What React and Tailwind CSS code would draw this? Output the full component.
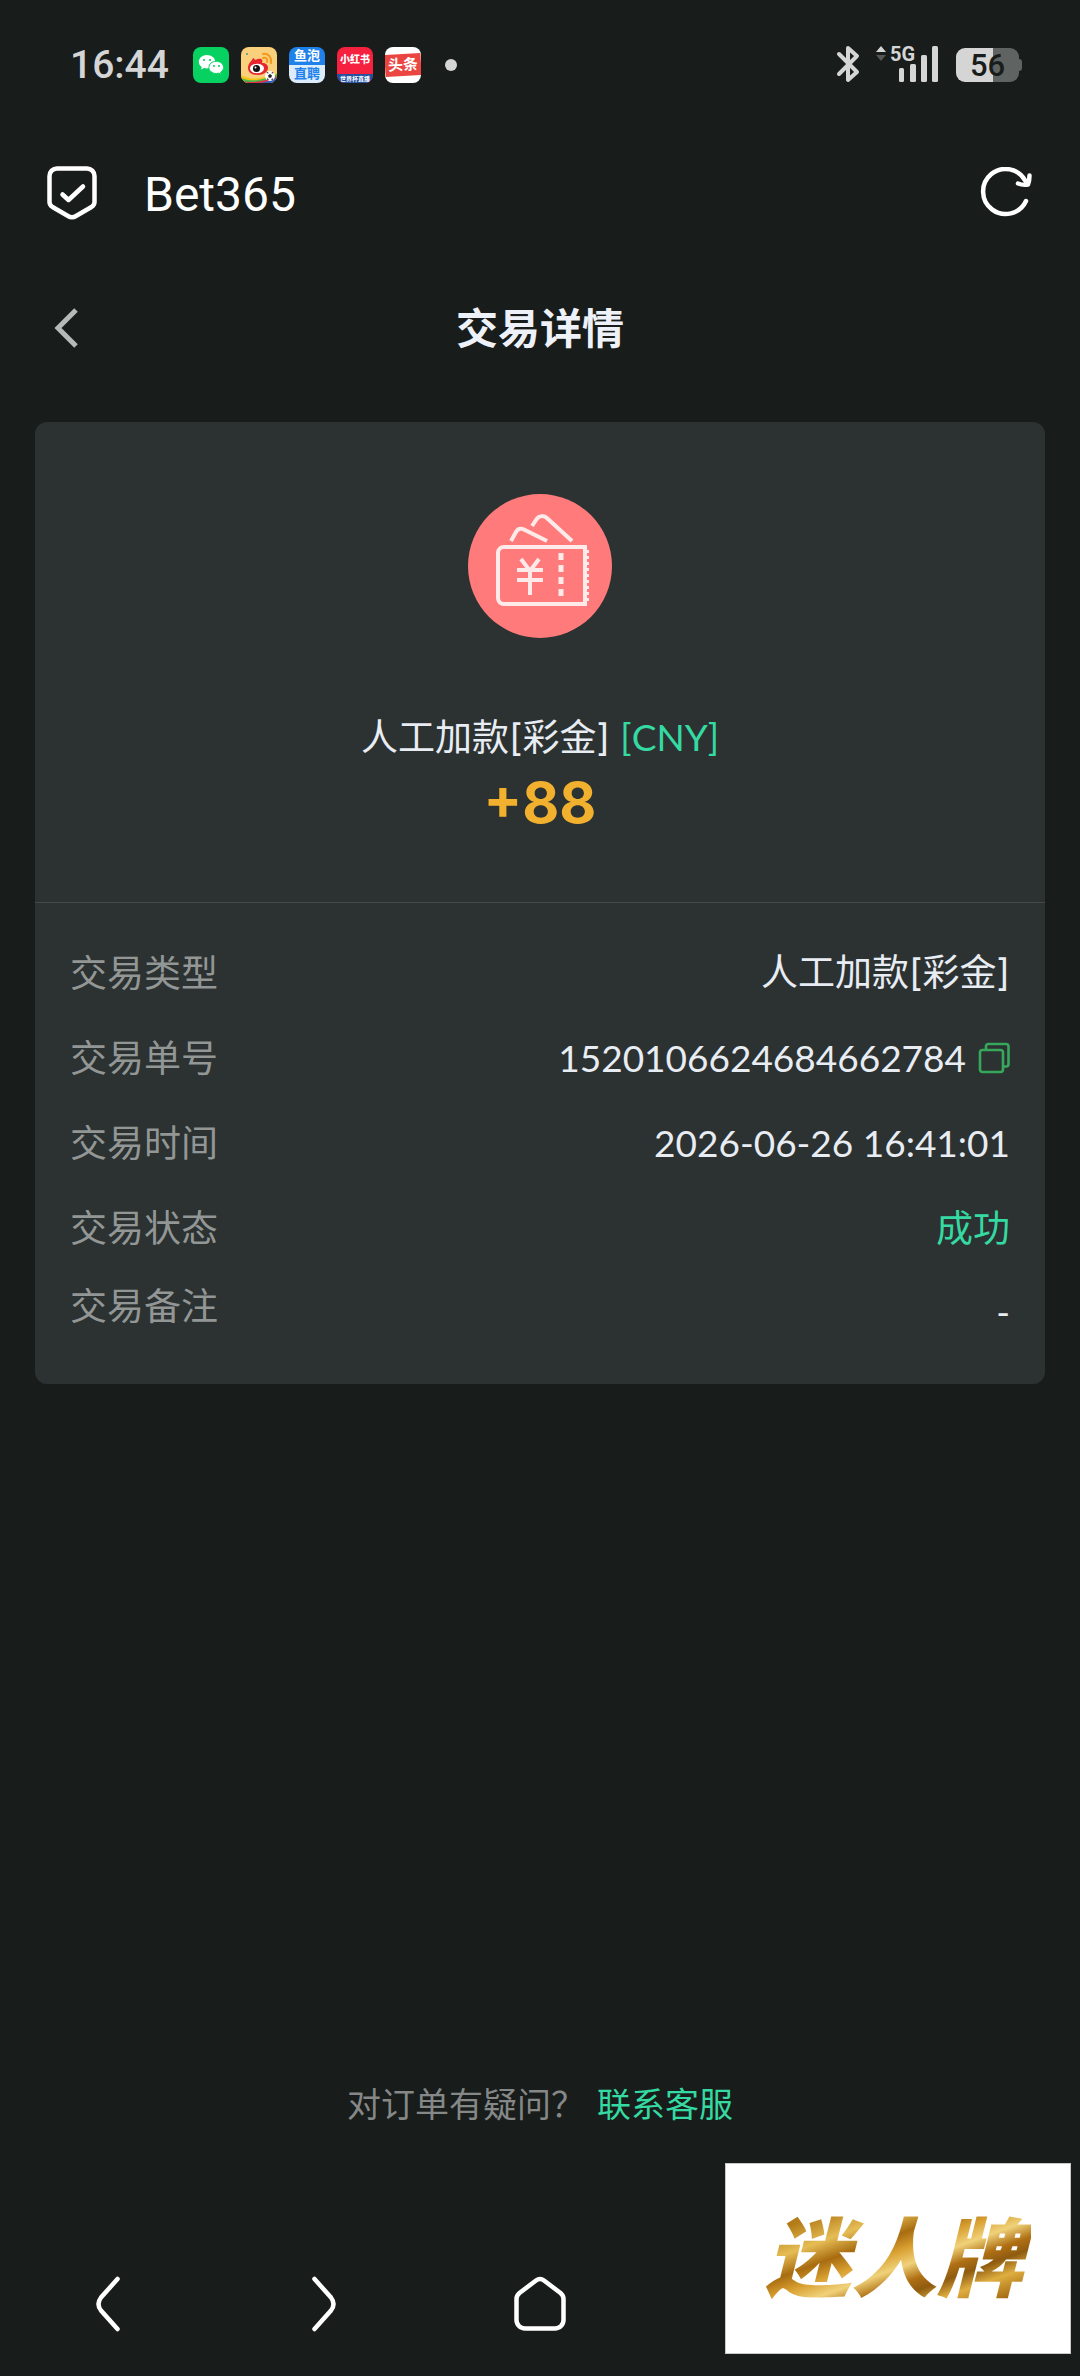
import React from 'react';

const details = [
  { label: '交易类型', value: '人工加款[彩金]', wide: true },
  { label: '交易单号', value: '1520106624684662784', copy: true },
  { label: '交易时间', value: '2026-06-26 16:41:01' },
  { label: '交易状态', value: '成功', success: true },
];

const WechatIcon = () => (
  <svg viewBox="0 0 36 36" className="w-9 h-9 rounded-lg bg-[#07d160]">
    <path d="M14 8c-4.600 0-8.200 3-8.200 6.800 0 2.100 1.100 4 3 5.200l-.8 2.600 3-1.500c1 .3 2 .4 3 .4 4.600 0 8.300-3 8.300-6.700S18.600 8 14 8z" fill="#fff" />
    <path d="M23.300 14.300c-4.200 0-7.400 2.700-7.400 6.100s3.200 6.100 7.400 6.100c.9 0 1.700-.1 2.500-.3l2.500 1.200-.7-2.200c1.900-1.200 3-2.900 3-4.800 0-3.400-3.200-6.100-7.300-6.100z" fill="#fff" stroke="#07d160" />
    <circle cx="11" cy="13" r="1.100" fill="#07d160" />
    <circle cx="17" cy="13" r="1.100" fill="#07d160" />
    <circle cx="21" cy="19" r="1" fill="#07d160" />
    <circle cx="26" cy="19" r="1" fill="#07d160" />
  </svg>
);

const WeiboIcon = () => (
  <svg viewBox="0 0 36 36" className="w-9 h-9 rounded-lg bg-[#fbd07c]">
    <path d="M0 28c8 5 18 5 36-2v10H0z" fill="#f5c518" />
    <path d="M0 31c10 4 20 3 36-4v9H0z" fill="#4db848" />
    <path d="M0 34c12 2 22 1 36-5v7H0z" fill="#d9304c" />
    <path d="M20 36c6-1 11-3 16-6v6z" fill="#2a64c5" />
    <circle cx="6" cy="7" r="1" fill="#3a9a9a" />
    <path d="M7 21c0-5 4-7 5-10 1 1 2 1 2 2 3-1 6-2 7 0 1 1 0 2 0 3 4 0 6 2 6 5 0 4-5 7-10 7S7 26 7 21z" fill="#e6252c" />
    <ellipse cx="16" cy="21.500" rx="7" ry="4.800" fill="#fff" />
    <circle cx="15.500" cy="21.500" r="3.500" fill="#111" />
    <circle cx="14.500" cy="20.500" r="1" fill="#fff" />
    <path d="M22 7c5-1 9 3 8 9M22 11c3-1 5 1 4 4" stroke="#f39a1e" strokeWidth="2" fill="none" strokeLinecap="round" />
    <circle cx="29" cy="29" r="5" fill="#fff" />
    <path d="M29 27l2 1.500-.8 2.300h-2.400L27 28.500zM25 26l2-1 .5 1.500zM33 26l-2-1-.5 1.500zM26 33l.5-2 1.500 1.500zM32 33l-.5-2-1.500 1.500z" fill="#222" />
  </svg>
);

const BluetoothIcon = () => (
  <svg viewBox="0 0 24 40" className="w-6 h-10 mr-4" fill="none" stroke="#d5d5d5" strokeWidth="4" strokeLinejoin="round" strokeLinecap="round">
    <path d="M3 9l18 18-9 8V3l9 8L3 29" />
  </svg>
);

const SignalIcon = () => (
  <svg viewBox="0 -10 64 60" className="w-16 h-[60px] mr-4" fill="#d5d5d5">
    <path d="M0 7l5-6 5 6z" />
    <path d="M0 10l5 6 5-6z" fill="#555" />
    <text x="14" y="16" fontFamily="Roboto" fontSize="20" fontWeight="700">5G</text>
    <rect x="23" y="23" width="5" height="14" rx="1.500" />
    <rect x="34" y="19" width="6" height="18" rx="1.500" />
    <rect x="45" y="10" width="6" height="27" rx="1.500" />
    <rect x="56" y="1" width="6" height="36" rx="1.500" />
  </svg>
);

const TicketIcon = () => (
  <svg viewBox="0 0 144 144" className="w-36 h-36" fill="none" stroke="#ffeaea" strokeWidth="4">
    <circle cx="72" cy="72" r="72" fill="#ff7b7b" stroke="none" />
    <path d="M117 53H36a6 6 0 0 0-6 6v45a6 6 0 0 0 6 6h81z" />
    <path d="M120 56v53" strokeWidth="2" strokeDasharray="3 3" />
    <path d="M93 59v44" strokeWidth="5" strokeDasharray="7 5" />
    <path d="M53 65l9 12 9-12M49 76h26M49 86h26M62 76v25" />
    <path d="M43 47l5-9c2-4 6-4 9-2l22 11" />
    <path d="M64 32l4-6c3-5 8-5 12-1l24 22" />
  </svg>
);

const StatusBar = () => (
  <div className="h-[130px] pl-[70px] pr-[58px] flex items-center">
    <span className="w-[123px] text-[39px] leading-none font-medium text-[#d5d5d5]">16:44</span>
    <div className="flex items-center gap-3">
      <WechatIcon />
      <WeiboIcon />
      <div className="w-9 h-9 rounded-lg overflow-hidden text-center text-[13px] leading-[18px] font-bold">
        <div className="bg-[#1f82ea] text-white">鱼泡</div>
        <div className="bg-[#dcecfb] text-[#1f82ea]">直聘</div>
      </div>
      <div className="w-9 h-9 rounded-lg overflow-hidden bg-[#f5213f] text-center text-white flex flex-col justify-between">
        <div className="pt-1 text-[10px] leading-[18px] font-black">小红书</div>
        <div className="bg-[#25509f] text-[6px] leading-[9px] font-bold whitespace-nowrap">世界杯直播</div>
      </div>
      <div className="w-9 h-9 rounded-lg overflow-hidden bg-white flex flex-col justify-center">
        <div className="bg-[#ea4541] text-center text-white text-[15px] leading-[22px] font-bold -rotate-3">头条</div>
      </div>
    </div>
    <span className="w-3 h-3 ml-6 rounded-full bg-[#d5d5d5]" />
    <div className="ml-auto flex items-center">
      <BluetoothIcon />
      <SignalIcon />
      <div className="w-[63px] h-[34px] rounded-[9px] bg-linear-to-r from-[#d5d5d5] from-59% to-[#5f6362] to-59% text-center text-[31px] leading-[35px] font-medium text-[#181c1b]">56</div>
      <span className="w-[3px] h-3 rounded-r bg-[#5f6362]" />
    </div>
  </div>
);

const BrowserBar = () => (
  <div className="h-[126px] pl-[47px] pr-[48px] flex items-center">
    <svg viewBox="0 0 50 54" className="w-[50px] h-[54px]" fill="none" stroke="#fff" strokeWidth="4.500" strokeLinecap="round" strokeLinejoin="round">
      <path d="M10 2.500h30a7.500 7.500 0 0 1 7.500 7.500v26q0 3-3 5L29 50q-4 2.500-8 0L5.500 41q-3-2-3-5V10A7.500 7.500 0 0 1 10 2.500z" />
      <path d="M15.500 28.500l6 5.500L36 20.500" />
    </svg>
    <span className="ml-[47px] pt-1 text-5xl leading-none text-white">Bet365</span>
    <button type="button" aria-label="刷新" className="ml-auto">
      <svg viewBox="0 0 52 52" className="w-[52px] h-[52px]" fill="none" stroke="#fff" strokeWidth="4.500" strokeLinecap="round" strokeLinejoin="round">
        <path d="M46 34A22.500 22.500 0 1 1 45.500 14" />
        <path d="M38 16.500q5 2 10 1 1.500-4 1.500-9" />
      </svg>
    </button>
  </div>
);

const PageHeader = () => (
  <header className="h-36 px-[54px] grid grid-cols-[1fr_auto_1fr] items-center">
    <button type="button" aria-label="返回" className="justify-self-start">
      <svg viewBox="0 0 24 40" className="w-6 h-10" fill="none" stroke="#b4bab8" strokeWidth="5">
        <path d="M22 2L4 20l18 18" />
      </svg>
    </button>
    <h1 className="pt-1 text-[42px] leading-none font-bold text-[#eef2f8]">交易详情</h1>
  </header>
);

const App = () => {
  return (
    <div className="relative min-h-screen flex flex-col bg-[#181c1b] font-[Roboto,'Noto_Sans_CJK_SC',sans-serif]">
      <StatusBar />
      <BrowserBar />
      <PageHeader />

      <main className="flex-1 flex flex-col px-[35px] pt-[22px] font-[Lato,'Noto_Sans_CJK_SC',sans-serif]">
        <section className="rounded-xl bg-[#2c3131] text-[37px] text-[#e8ecf3]">
          {/* Amount */}
          <div className="flex flex-col items-center pt-[72px] pb-[69px] border-b border-[#454a49]">
            <TicketIcon />
            <p className="mt-[71px] h-14 leading-[56px]">
              <span className="font-[Inter,'Noto_Sans_CJK_SC',sans-serif]">人工加款[彩金] </span>
              <span className="text-[#35d9a2]">[CNY]</span>
            </p>
            <p className="mt-2 text-[57px] leading-[60px] font-bold text-[#f2b02f] font-[Inter,sans-serif]">+88</p>
          </div>

          {/* Details */}
          <dl className="px-[35px] pt-[27px] pb-[42px]">
            {details.map((item) => (
              <div key={item.label} className="h-[85px] flex items-center justify-between">
                <dt className="text-[#929796]">{item.label}</dt>
                <dd className={item.success ? 'text-[#35d9a2]' : 'flex items-center gap-3'}>
                  <span className={item.wide ? "font-[Inter,'Noto_Sans_CJK_SC',sans-serif]" : undefined}>{item.value}</span>
                  {item.copy && (
                    <button type="button" aria-label="复制">
                      <svg viewBox="0 0 32 32" className="w-8 h-8" fill="none" stroke="#36a85c" strokeWidth="2.600">
                        <rect x="2" y="8" width="23" height="22" rx="2.500" />
                        <path d="M8 8V4.500A2.500 2.500 0 0 1 10.500 2H28a2.500 2.500 0 0 1 2.500 2.500V22a2.500 2.500 0 0 1-2.500 2.500h-3" />
                      </svg>
                    </button>
                  )}
                </dd>
              </div>
            ))}
            <div className="h-[72px] flex items-center justify-between">
              <dt className="text-[#929796]">交易备注</dt>
              <dd className="pt-3">-</dd>
            </div>
          </dl>
        </section>

        <p className="mt-auto pb-[107px] flex justify-center gap-3 text-[34px] leading-[50px] text-[#858887]">
          对订单有疑问？
          <a href="#service" className="text-[#35d9a2]">联系客服</a>
        </p>
      </main>

      <nav className="h-[140px] pb-1 grid grid-cols-5 items-center justify-items-center">
        <button type="button" aria-label="后退">
          <svg viewBox="0 0 24 56" className="w-6 h-14" fill="none" stroke="#fff" strokeWidth="4.500" strokeLinecap="round">
            <path d="M21.500 3L5 21.500q-5 6.500 0 13L21.500 53" />
          </svg>
        </button>
        <button type="button" aria-label="前进">
          <svg viewBox="0 0 24 56" className="w-6 h-14" fill="none" stroke="#fff" strokeWidth="4.500" strokeLinecap="round">
            <path d="M2.500 3L19 21.500q5 6.500 0 13L2.500 53" />
          </svg>
        </button>
        <button type="button" aria-label="主页">
          <svg viewBox="0 0 52 56" className="w-[52px] h-14" fill="none" stroke="#fff" strokeWidth="4.500">
            <path d="M22 4.500q4-3 8 0L46.500 17q3 2.500 3 6v21a8.500 8.500 0 0 1-8.500 8.500H11A8.500 8.500 0 0 1 2.500 44V23q0-3.500 3-6z" />
          </svg>
        </button>
      </nav>

      {/* Brand badge over the bottom corner */}
      <div className="absolute right-[9px] bottom-[22px] w-[346px] h-[191px] pt-1 pr-2 flex items-center justify-center bg-white border border-[#c8caca]">
        <span className="px-2 text-[86px] leading-[110px] font-black italic text-transparent bg-clip-text bg-[linear-gradient(160deg,#b47c18_15%,#e6bd55_28%,#a86c10_38%,#d9a032_46%,#f0d27a_54%,#b07014_62%,#8f5b10_68%,#dfae40_76%,#a0660f_88%)]">迷人牌</span>
      </div>
    </div>
  );
};

export default App;
